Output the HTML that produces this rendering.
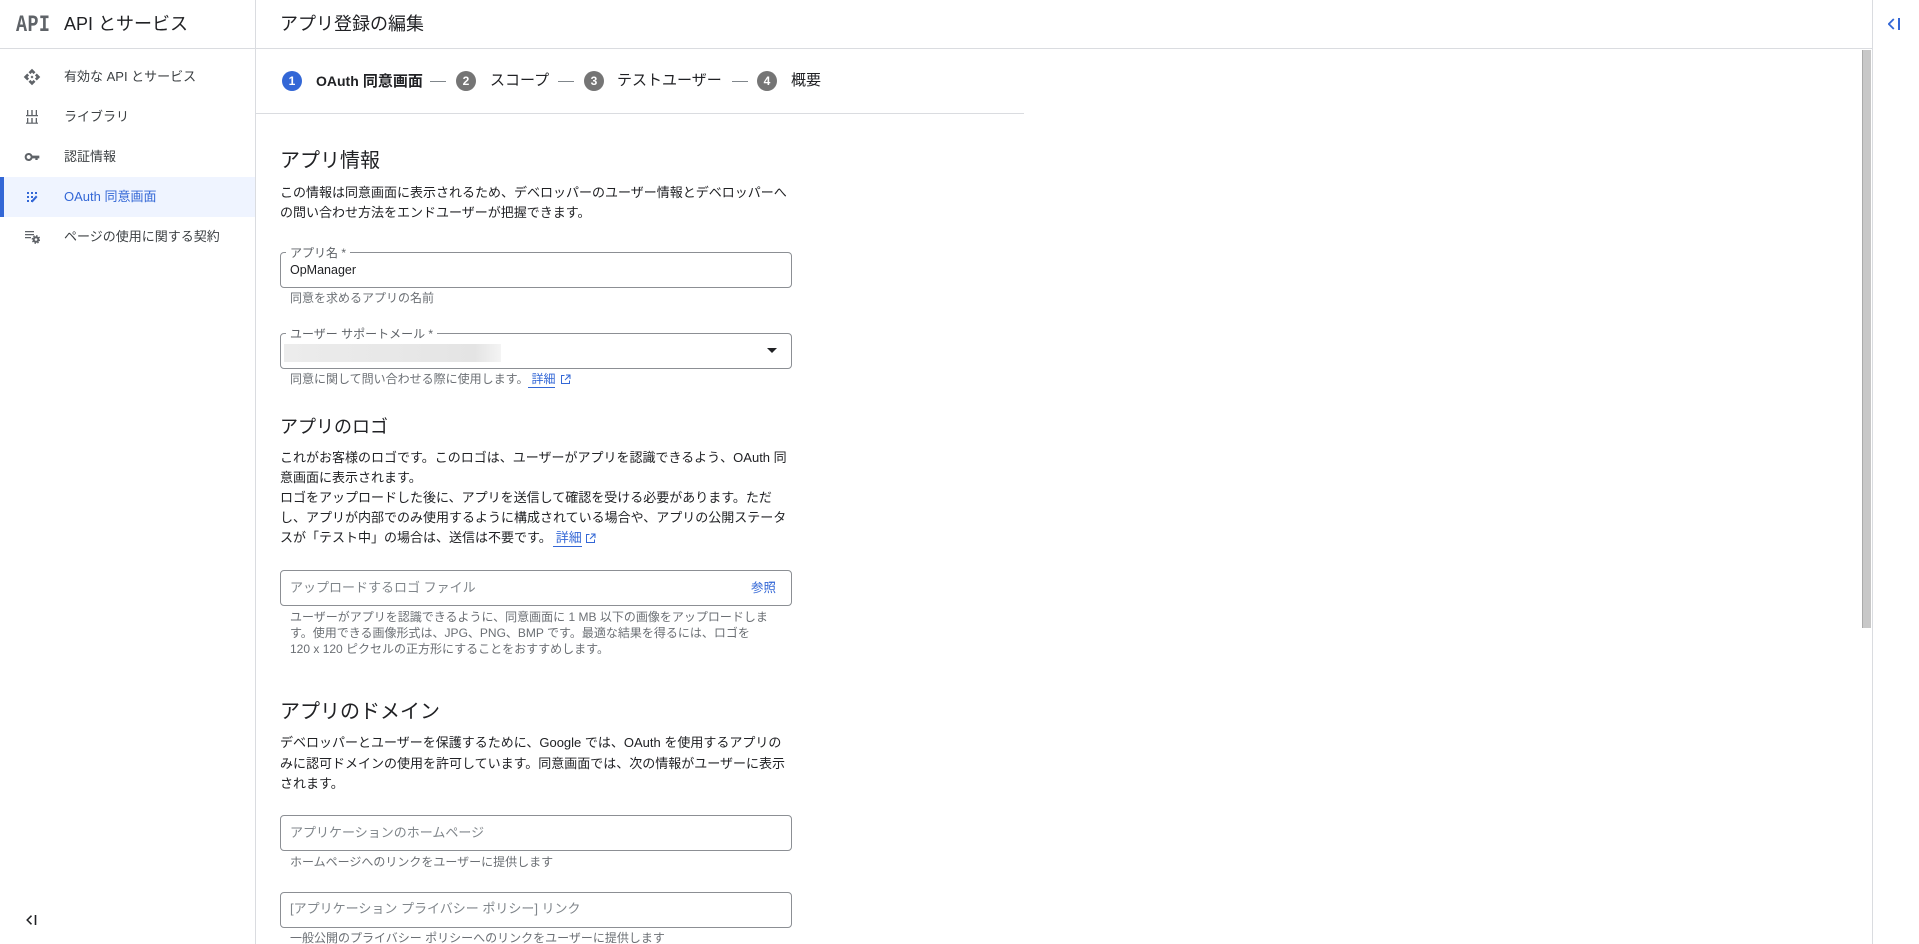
<!DOCTYPE html>
<html lang="ja">
<head>
<meta charset="utf-8">
<title>アプリ登録の編集</title>
<style>
html,body{margin:0;padding:0;width:1919px;height:944px;overflow:hidden;background:#fff}
body{position:relative;font-family:"Liberation Sans","Noto Sans CJK JP",sans-serif;color:#202124}
.a{position:absolute}
.t{position:absolute;white-space:nowrap;line-height:20px;font-size:13px;color:#202124}
.h{color:#6b6f74;font-size:12px}
.ph{color:#80868b;font-size:13px}
.lab{color:#5f6368;font-size:12px;background:#fff;padding:0 4px;line-height:14px}
.nav{color:#3c4043}
.f{position:absolute;left:280px;width:510px;height:34px;border:1px solid #8c8f94;border-radius:4px;background:#fff}
.c{position:absolute;top:71px;width:20px;height:20px;border-radius:50%;background:#757575;color:#fff;font-size:12px;font-weight:700;line-height:20px;text-align:center}
.d{position:absolute;top:81px;width:16px;height:1px;background:#80868b}
a.l{color:#3367d6;text-decoration:none;border-bottom:1px solid #3367d6;padding-left:3px}
</style>
</head>
<body>
<!-- structure lines -->
<div class="a" style="left:0;top:48px;width:1873px;height:1px;background:#dadce0"></div>
<div class="a" style="left:255px;top:0;width:1px;height:944px;background:#dadce0"></div>
<div class="a" style="left:1872px;top:0;width:1px;height:944px;background:#dadce0"></div>
<div class="a" style="left:256px;top:113px;width:768px;height:1px;background:#dadce0"></div>

<!-- header -->
<div class="a" style="left:16px;top:11px;width:33px;height:28px;line-height:28px;font-family:'Liberation Mono',monospace;font-weight:700;font-size:23px;color:#5f6368;transform:scaleX(.8);transform-origin:0 50%;letter-spacing:.5px">API</div>
<div class="t" style="left:64px;top:14px;font-size:18px">API とサービス</div>
<div class="t" style="left:280px;top:14px;font-size:18px">アプリ登録の編集</div>

<!-- sidebar -->
<div class="a" style="left:0;top:177px;width:255px;height:40px;background:#eff4ff"></div>
<div class="a" style="left:0;top:177px;width:4px;height:40px;background:#3367d6"></div>

<svg class="a" style="left:23px;top:68px" width="18" height="18" viewBox="0 0 24 24" fill="#5f6368"><path d="M14 12l-2 2-2-2 2-2 2 2zm-2-6l2.12 2.12 2.5-2.5L12 1 7.38 5.62l2.5 2.5L12 6zm-6 6l2.12-2.12-2.5-2.5L1 12l4.62 4.62 2.5-2.5L6 12zm12 0l-2.12 2.12 2.5 2.5L23 12l-4.62-4.62-2.5 2.5L18 12zm-6 6l-2.12-2.12-2.5 2.5L12 23l4.62-4.62-2.5-2.5L12 18z"/></svg>
<div class="t nav" style="left:64px;top:67px">有効な API とサービス</div>

<svg class="a" style="left:26px;top:110px" width="12" height="14" viewBox="0 0 12 14" fill="#5f6368"><path d="M1 0h1.300v5H1zM5.300 0h1.400v5H5.300zM9.700 0H11v5H9.700zM0 5h12v1.200H0zM1 8h1.300v5H1zM5.300 8h1.400v5H5.300zM9.700 8H11v5H9.700zM0 12.600h12v1.200H0z"/></svg>
<div class="t nav" style="left:64px;top:107px">ライブラリ</div>

<svg class="a" style="left:24px;top:149px" width="16" height="16" viewBox="0 0 24 24" fill="#5f6368"><path d="M12.650 10C11.830 7.670 9.610 6 7 6c-3.310 0-6 2.690-6 6s2.690 6 6 6c2.610 0 4.830-1.670 5.650-4H17v2.500h3.500V14H23v-4H12.650zM7 15c-1.660 0-3-1.340-3-3s1.340-3 3-3 3 1.340 3 3-1.340 3-3 3z"/></svg>
<div class="t nav" style="left:64px;top:147px">認証情報</div>

<svg class="a" style="left:27px;top:192px" width="11" height="11" viewBox="0 0 11 11" fill="#3367d6"><path d="M0 0h2v2H0zM4 0h2v2H4zM8 0h2v2H8zM0 4h2v2H0zM4 4h2v2H4zM0 8h2v2H0zM4 8h2v2H4zM9 3.500l1.500 1.500L5.500 10.500 4 9z" /></svg>
<div class="t" style="left:64px;top:187px;color:#3367d6">OAuth 同意画面</div>

<svg class="a" style="left:25px;top:231px" width="15" height="13" viewBox="0 0 15 13" fill="#5f6368"><path d="M0 0h9v1.300H0zM0 3h9v1.300H0zM0 6h6v1.300H0z"/><circle cx="11" cy="8.500" r="2.300" fill="none" stroke="#5f6368" stroke-width="2"/><circle cx="11" cy="8.500" r="3.700" fill="none" stroke="#5f6368" stroke-width="1.300" stroke-dasharray="1.500 1.400"/></svg>
<div class="t nav" style="left:64px;top:227px">ページの使用に関する契約</div>

<svg class="a" style="left:26px;top:915px" width="11" height="10" viewBox="0 0 11 10" fill="none" stroke="#202124" stroke-width="1.500"><path d="M5.500 .7L1.200 5l4.300 4.300"/><path d="M9.500 0v10" stroke-width="1.600"/></svg>

<!-- stepper -->
<div class="c" style="left:282px;background:#3367d6">1</div>
<div class="t" style="left:316px;top:71px;font-size:15px;font-weight:700"><span style="font-size:14px">OAuth</span> 同意画面</div>
<div class="d" style="left:430px"></div>
<div class="c" style="left:456px">2</div>
<div class="t" style="left:490px;top:71px;font-size:15px">スコープ</div>
<div class="d" style="left:558px"></div>
<div class="c" style="left:584px">3</div>
<div class="t" style="left:617px;top:71px;font-size:15px">テストユーザー</div>
<div class="d" style="left:732px"></div>
<div class="c" style="left:757px">4</div>
<div class="t" style="left:791px;top:71px;font-size:15px">概要</div>

<!-- app info -->
<div class="t" style="left:280px;top:151px;font-size:20px">アプリ情報</div>
<div class="t" style="left:280px;top:183px">この情報は同意画面に表示されるため、デベロッパーのユーザー情報とデベロッパーへ</div>
<div class="t" style="left:280px;top:203px">の問い合わせ方法をエンドユーザーが把握できます。</div>

<div class="f" style="top:252px"></div>
<div class="t lab" style="left:286px;top:246px">アプリ名 *</div>
<div class="t" style="left:290px;top:260px;font-size:12.500px">OpManager</div>
<div class="t h" style="left:290px;top:288px">同意を求めるアプリの名前</div>

<div class="f" style="top:333px"></div>
<div class="t lab" style="left:286px;top:327px">ユーザー サポートメール *</div>
<div class="a" style="left:284px;top:344px;width:217px;height:18px;background:linear-gradient(90deg,#ececec 0,#e6e6e6 70%,#e4e4e4 88%,#f4f4f4 100%)"></div>
<div class="a" style="left:767px;top:348px;width:0;height:0;border-left:5.500px solid transparent;border-right:5.500px solid transparent;border-top:5.500px solid #202124"></div>
<div class="t h" style="left:290px;top:369px">同意に関して問い合わせる際に使用します。<a class="l" style="line-height:16px;display:inline-block">詳細</a></div>
<svg class="a" style="left:560px;top:374px" width="11" height="11" viewBox="0 0 11 11" fill="none" stroke="#3367d6" stroke-width="1"><path d="M4.500 1.500H1.500v8h8V6.500M6 1h4v4M10 1L5 6"/></svg>

<!-- logo -->
<div class="t" style="left:280px;top:417px;font-size:18px">アプリのロゴ</div>
<div class="t" style="left:280px;top:448px">これがお客様のロゴです。このロゴは、ユーザーがアプリを認識できるよう、OAuth 同</div>
<div class="t" style="left:280px;top:468px">意画面に表示されます。</div>
<div class="t" style="left:280px;top:488px">ロゴをアップロードした後に、アプリを送信して確認を受ける必要があります。ただ</div>
<div class="t" style="left:280px;top:508px">し、アプリが内部でのみ使用するように構成されている場合や、アプリの公開ステータ</div>
<div class="t" style="left:280px;top:528px">スが「テスト中」の場合は、送信は不要です。<a class="l" style="line-height:17px;display:inline-block;margin-left:1px">詳細</a></div>
<svg class="a" style="left:585px;top:533px" width="11" height="11" viewBox="0 0 11 11" fill="none" stroke="#3367d6" stroke-width="1"><path d="M4.500 1.500H1.500v8h8V6.500M6 1h4v4M10 1L5 6"/></svg>

<div class="f" style="top:570px"></div>
<div class="t ph" style="left:290px;top:578px">アップロードするロゴ ファイル</div>
<div class="t" style="left:751px;top:578px;font-size:12.500px;color:#3367d6">参照</div>
<div class="t h" style="left:290px;top:607px">ユーザーがアプリを認識できるように、同意画面に 1 MB 以下の画像をアップロードしま</div>
<div class="t h" style="left:290px;top:623px">す。使用できる画像形式は、JPG、PNG、BMP です。最適な結果を得るには、ロゴを</div>
<div class="t h" style="left:290px;top:639px">120 x 120 ピクセルの正方形にすることをおすすめします。</div>

<!-- domain -->
<div class="t" style="left:280px;top:702px;font-size:20px">アプリのドメイン</div>
<div class="t" style="left:280px;top:733px">デベロッパーとユーザーを保護するために、Google では、OAuth を使用するアプリの</div>
<div class="t" style="left:280px;top:754px">みに認可ドメインの使用を許可しています。同意画面では、次の情報がユーザーに表示</div>
<div class="t" style="left:280px;top:774px">されます。</div>

<div class="f" style="top:815px"></div>
<div class="t ph" style="left:290px;top:823px">アプリケーションのホームページ</div>
<div class="t h" style="left:290px;top:852px">ホームページへのリンクをユーザーに提供します</div>

<div class="f" style="top:892px"></div>
<div class="t ph" style="left:290px;top:899px">[アプリケーション プライバシー ポリシー] リンク</div>
<div class="t h" style="left:290px;top:928px">一般公開のプライバシー ポリシーへのリンクをユーザーに提供します</div>

<!-- scrollbar -->
<div class="a" style="left:1862px;top:50px;width:9px;height:578px;background:#c8c8c8;border-left:1px solid #aaa;box-sizing:border-box"></div>

<!-- right panel icon -->
<svg class="a" style="left:1888px;top:18px" width="13" height="12" viewBox="0 0 13 12" fill="none" stroke="#3367d6" stroke-width="1.800"><path d="M5.800 1L.8 6l5 5"/><path d="M11 0v12" stroke-width="2"/></svg>
</body>
</html>
